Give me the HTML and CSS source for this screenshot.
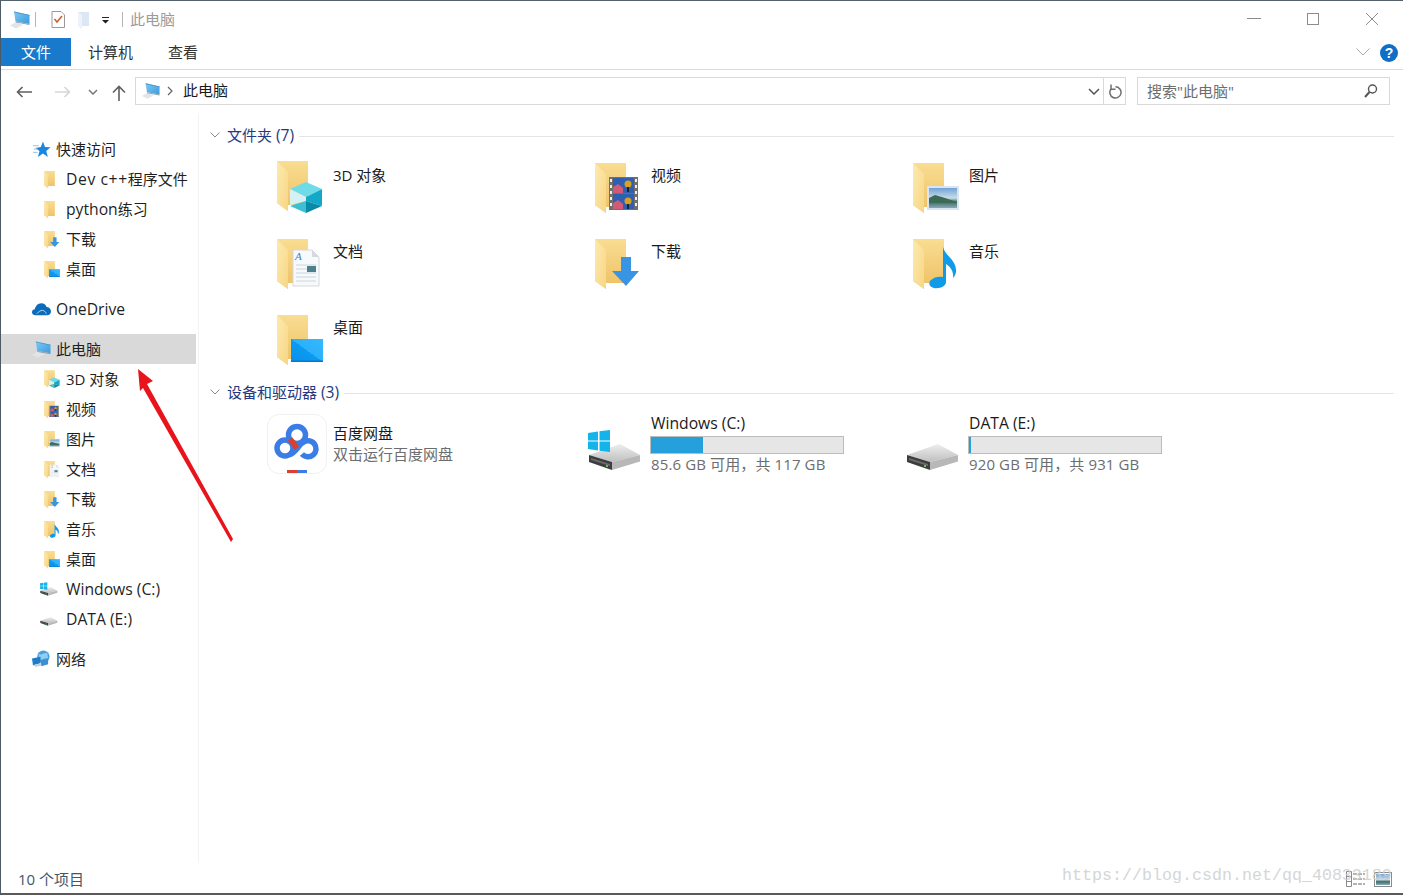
FILE: index.html
```html
<!DOCTYPE html>
<html lang="zh-CN">
<head>
<meta charset="utf-8">
<title>此电脑</title>
<link rel="stylesheet" href="styles.css">
</head>
<body>
<svg class="defs" width="0" height="0" aria-hidden="true">
  <defs>
    <linearGradient id="gBack" x1="0" y1="0" x2="0" y2="1"><stop offset="0" stop-color="#f9dd92"/><stop offset="1" stop-color="#eec063"/></linearGradient>
    <linearGradient id="gFront" x1="0" y1="0" x2="1" y2="1"><stop offset="0" stop-color="#fdeab0"/><stop offset="1" stop-color="#f7d684"/></linearGradient>
    <linearGradient id="gDesk" x1="0" y1="1" x2="1" y2="0"><stop offset="0" stop-color="#0a8fe8"/><stop offset=".5" stop-color="#0a9cf2"/><stop offset=".5" stop-color="#2bb0fb"/><stop offset="1" stop-color="#35b8ff"/></linearGradient>
    <linearGradient id="gSky" x1="0" y1="0" x2="0" y2="1"><stop offset="0" stop-color="#6fa3d8"/><stop offset=".5" stop-color="#c9dde8"/><stop offset=".7" stop-color="#3f6d62"/><stop offset="1" stop-color="#8aa9bd"/></linearGradient>
    <linearGradient id="gTop" x1="0" y1="0" x2="0" y2="1"><stop offset="0" stop-color="#eeeeee"/><stop offset="1" stop-color="#bfbfbf"/></linearGradient>
    <linearGradient id="gMon" x1="0" y1="0" x2="1" y2="1"><stop offset="0" stop-color="#7fcaf2"/><stop offset="1" stop-color="#3b9ae0"/></linearGradient>

    <symbol id="folder" viewBox="0 0 56 56">
      <path d="M1 3H32V47H12V53L1 45Z" fill="url(#gBack)"/>
      <path d="M1 3L12 14V53L1 45Z" fill="url(#gFront)"/>
    </symbol>

    <symbol id="f3d" viewBox="0 0 56 56">
      <use href="#folder" y="-2" width="56" height="56"/>
      <path d="M30 22L46 29L30 37L14 29Z" fill="#6ddbe8"/>
      <path d="M14 29L30 37V41L14 45Z" fill="#d6f1f3"/>
      <path d="M30 37L46 29V46L30 41Z" fill="#12a9c9"/>
      <path d="M14 46L30 41V53Z" fill="#3bbfd5"/>
      <path d="M46 46L30 41V53Z" fill="#0b8aa8"/>
    </symbol>
    <symbol id="fvideo" viewBox="0 0 56 56">
      <use href="#folder" width="56" height="56"/>
      <rect x="15" y="17" width="29" height="33" fill="#6f6f6f"/>
      <path d="M16 19h2v3h-2zM16 25h2v3h-2zM16 31h2v3h-2zM16 37h2v3h-2zM16 43h2v3h-2zM41 19h2v3h-2zM41 25h2v3h-2zM41 31h2v3h-2zM41 37h2v3h-2zM41 43h2v3h-2z" fill="#eee"/>
      <rect x="19" y="18" width="21" height="15" fill="#2f5fb0"/>
      <rect x="19" y="34" width="21" height="15" fill="#2f5fb0"/>
      <path d="M19 27l5-3 5 4v5H19zM19 43l5-3 5 4v5H19z" fill="#d05a78"/>
      <circle cx="34" cy="24" r="3.500" fill="#d8a020"/><circle cx="34" cy="41" r="3.500" fill="#d8a020"/>
      <path d="M33 27h2v5h-2zM33 44h2v5h-2z" fill="#222"/>
    </symbol>
    <symbol id="fpic" viewBox="0 0 56 56">
      <use href="#folder" width="56" height="56"/>
      <rect x="15" y="26" width="32" height="24" fill="#d9e6f2"/>
      <rect x="17" y="28" width="28" height="20" fill="url(#gSky)"/>
      <path d="M17 38l6-3 10 3 12 4v1H17z" fill="#3b6a55"/>
    </symbol>
    <symbol id="fdoc" viewBox="0 0 56 56">
      <use href="#folder" width="56" height="56"/>
      <path d="M17 14H36L43 21V50H17Z" fill="#f8f9fb" stroke="#d4d8dd"/>
      <path d="M36 14V21H43Z" fill="#d4dae0"/>
      <path d="M20 29H40M20 33H40M20 37H40M20 41H40M20 45H40" stroke="#c7d4e2"/>
      <text class="doc-a" x="19" y="24">A</text>
      <rect x="31" y="30" width="9" height="6" fill="#4d7f8c"/>
    </symbol>
    <symbol id="fdown" viewBox="0 0 56 56">
      <use href="#folder" width="56" height="56"/>
      <path d="M27 21H37V35H45L32 50L18 35H27Z" fill="#3a94e4"/>
    </symbol>
    <symbol id="fmusic" viewBox="0 0 56 56">
      <use href="#folder" width="56" height="56"/>
      <path d="M31 11C33 20 45 24 44 36C43.500 39 42 41 41 42C42 34 37 30 34 28V46C34 50 28 53 22 52C17 51 16 47 19 44C22 41 27 40 31 41Z" fill="#0f9be8"/>
    </symbol>
    <symbol id="fdesk" viewBox="0 0 56 56">
      <use href="#folder" width="56" height="56"/>
      <rect x="15" y="27" width="32" height="23" fill="url(#gDesk)"/>
      <rect x="15" y="48.500" width="32" height="1.500" fill="#0878c8"/>
    </symbol>
    <symbol id="fplain" viewBox="0 0 56 56">
      <use href="#folder" width="56" height="56"/>
    </symbol>

    <symbol id="pc" viewBox="0 0 20 20">
      <path d="M6 12L0 15.500L6 18.500L13 15Z" fill="#e2e5e8"/>
      <path d="M4 1.500L19.500 5V14L5.500 11.500Z" fill="url(#gMon)"/>
      <path d="M4 1.500L19.500 5V5.800L4.100 2.400Z" fill="#4a92cc"/>
      <path d="M5.500 11.500L19.500 14V15L6 12.500Z" fill="#8f9eaa"/>
    </symbol>
    <symbol id="star" viewBox="0 0 20 20">
      <path d="M11.500 1.500L13.700 7.300L19.500 7.700L15 11.500L16.700 17.800L11.500 14.300L6.200 17.800L7.900 11.500L3.500 8.300L9.300 7.300Z" fill="#1a87dc"/>
      <path d="M1 6H7M2 9.500H6M1 13H6" stroke="#8cc2ec"/>
    </symbol>
    <symbol id="cloud" viewBox="0 0 20 14">
      <path d="M4 13.500C1.500 13.500 0 12 0 10.300C0 8.500 1.300 7.300 3 7.200C3.600 4 6.200 1 9.800 1C12.600 1 14.600 2.700 15.400 5C17.800 5 20 7 20 9.600C20 12 18.200 13.500 16 13.500Z" fill="#0c6cbc"/>
      <path d="M5 12C7 9.800 9 8.300 11 8.500C13 8.700 14.300 10 15 12" fill="none" stroke="#cfe4f5" stroke-width=".9"/>
    </symbol>
    <symbol id="net" viewBox="0 0 20 20">
      <circle cx="12" cy="7" r="6.500" fill="#4b9fda"/>
      <path d="M7 4C10 6 13 3 16 3L17 9C14 8 11 10 8 11Z" fill="#8dd0f0"/>
      <path d="M0 9L9 7V14L1 16Z" fill="#1f7cc8"/>
      <path d="M1 16L9 14L11 16L4 18Z" fill="#c9d1d8"/>
      <path d="M9 11L17 9V15L10 17Z" fill="#3d8fd2"/>
    </symbol>

    <symbol id="drive" viewBox="0 0 60 60">
      <path d="M4 41L35 30L55 41L27 48Z" fill="url(#gTop)"/>
      <path d="M27 48L55 41V47.500L27 56Z" fill="#b8b8b8"/>
      <path d="M4 41L27 48V56L4 48Z" fill="#3d3d3d"/>
      <path d="M6 44L25 50V52L6 46Z" fill="#6b6b6b"/>
      <rect x="21" y="51" width="2" height="2" fill="#59c85a"/>
    </symbol>
    <symbol id="drivewin" viewBox="0 0 60 60">
      <use href="#drive" width="60" height="60"/>
      <path d="M3 19L13 17.500V26.500H3ZM14.500 17.300L25 16V26.500H14.500ZM3 27.500H13V36.500L3 35ZM14.500 27.500H25V38L14.500 36.700Z" fill="#12b4ea"/>
    </symbol>
  </defs>
</svg>

<div class="window">
  <header class="titlebar">
    <svg class="qa-pc"><use href="#pc"/></svg>
    <span class="qa-sep"></span>
    <svg class="qa-check" viewBox="0 0 14 17">
      <path d="M1 .500H10L13.500 4V16.500H1Z" fill="#fff" stroke="#9a9a9a"/>
      <path d="M3.500 8L6 11L11 5" fill="none" stroke="#d8572a" stroke-width="1.500"/>
    </svg>
    <svg class="qa-folder" viewBox="0 0 13 18">
      <path d="M1 1H12V15H5V18L1 15Z" fill="#dce6f4"/>
      <path d="M1 1L5 4V18L1 15Z" fill="#eef3fb"/>
    </svg>
    <svg class="qa-drop" viewBox="0 0 8 7">
      <path d="M0 0H7V1H0ZM0 3H7L3.500 6.500Z" fill="#222"/>
    </svg>
    <span class="qa-sep qa-sep2"></span>
    <span class="title-text">此电脑</span>
    <div class="win-controls">
      <svg class="wc" viewBox="0 0 14 12"><path d="M0 5.500H14" stroke="#8c8c8c"/></svg>
      <svg class="wc" viewBox="0 0 14 12"><rect x="1.500" y=".5" width="11" height="11" fill="none" stroke="#8c8c8c"/></svg>
      <svg class="wc" viewBox="0 0 14 12"><path d="M1 0L13 12M13 0L1 12" stroke="#8c8c8c"/></svg>
    </div>
  </header>

  <nav class="ribbon">
    <span class="tab tab-file">文件</span>
    <span class="tab tab-a">计算机</span>
    <span class="tab tab-b">查看</span>
    <svg class="rib-chev" viewBox="0 0 14 8"><path d="M.5 .5L7 7L13.500 .5" fill="none" stroke="#a9a9a9"/></svg>
    <span class="help">?</span>
  </nav>

  <div class="addrbar">
    <svg class="nav-btn back" viewBox="0 0 16 12"><path d="M16 6H1.500M6.500 1L1.500 6L6.500 11" fill="none" stroke="#5f5f5f" stroke-width="1.600"/></svg>
    <svg class="nav-btn fwd" viewBox="0 0 16 12"><path d="M0 6H14.500M9.500 1L14.500 6L9.500 11" fill="none" stroke="#d6d6d6" stroke-width="1.600"/></svg>
    <svg class="nav-btn recent" viewBox="0 0 10 6"><path d="M1 1L5 5L9 1" fill="none" stroke="#777" stroke-width="1.500"/></svg>
    <svg class="nav-btn up" viewBox="0 0 14 16"><path d="M7 16V1.500M1 7.500L7 1.500L13 7.500" fill="none" stroke="#5f5f5f" stroke-width="1.600"/></svg>
    <div class="addr-box">
      <svg class="addr-pc"><use href="#pc"/></svg>
      <svg class="addr-crumb" viewBox="0 0 6 10"><path d="M1 1L5 5L1 9" fill="none" stroke="#666" stroke-width="1.200"/></svg>
      <span class="addr-text">此电脑</span>
      <svg class="addr-drop" viewBox="0 0 12 7"><path d="M1 1L6 6L11 1" fill="none" stroke="#555" stroke-width="1.500"/></svg>
    </div>
    <div class="refresh">
      <svg viewBox="0 0 14 15"><path d="M7.500 2.800A5.600 5.600 0 1 1 3 5" fill="none" stroke="#6f6f6f" stroke-width="1.500"/><path d="M3 .5V5.300H7.500" fill="none" stroke="#6f6f6f" stroke-width="1.500"/></svg>
    </div>
    <div class="search">
      <span class="search-text">搜索"此电脑"</span>
      <svg class="search-ico" viewBox="0 0 14 14"><circle cx="8.500" cy="5" r="4" fill="none" stroke="#555" stroke-width="1.400"/><path d="M5.500 8L1 13" stroke="#555" stroke-width="2"/></svg>
    </div>
  </div>

  <main class="main">
    <aside class="sidebar">
      <div class="nav-row top"><svg class="nav-ico"><use href="#star"/></svg>快速访问</div>
      <div class="nav-row indent"><svg class="nav-ico"><use href="#fplain"/></svg><span class="lat plus">Dev c++</span>程序文件</div>
      <div class="nav-row indent"><svg class="nav-ico"><use href="#fplain"/></svg><span class="lat">python</span>练习</div>
      <div class="nav-row indent"><svg class="nav-ico"><use href="#fdown"/></svg>下载</div>
      <div class="nav-row indent"><svg class="nav-ico"><use href="#fdesk"/></svg>桌面</div>
      <div class="nav-row top spaced"><svg class="nav-ico cloud"><use href="#cloud"/></svg><span class="lat">OneDrive</span></div>
      <div class="nav-row top spaced selected"><svg class="nav-ico"><use href="#pc"/></svg>此电脑</div>
      <div class="nav-row indent"><svg class="nav-ico"><use href="#f3d"/></svg>3D 对象</div>
      <div class="nav-row indent"><svg class="nav-ico"><use href="#fvideo"/></svg>视频</div>
      <div class="nav-row indent"><svg class="nav-ico"><use href="#fpic"/></svg>图片</div>
      <div class="nav-row indent"><svg class="nav-ico"><use href="#fdoc"/></svg>文档</div>
      <div class="nav-row indent"><svg class="nav-ico"><use href="#fdown"/></svg>下载</div>
      <div class="nav-row indent"><svg class="nav-ico"><use href="#fmusic"/></svg>音乐</div>
      <div class="nav-row indent"><svg class="nav-ico"><use href="#fdesk"/></svg>桌面</div>
      <div class="nav-row indent"><svg class="nav-ico drv" viewBox="0 12 60 48"><use href="#drivewin" width="60" height="60"/></svg><span class="lat">Windows (C:)</span></div>
      <div class="nav-row indent"><svg class="nav-ico drv" viewBox="0 12 60 48"><use href="#drive" width="60" height="60"/></svg><span class="lat">DATA (E:)</span></div>
      <div class="nav-row top spaced"><svg class="nav-ico"><use href="#net"/></svg>网络</div>
    </aside>

    <section class="content">
      <div class="group-head">
        <svg class="group-chev" viewBox="0 0 10 6"><path d="M.5 .5L5 5L9.500 .5" fill="none" stroke="#8a8a8a"/></svg>
        <span class="group-title">文件夹 <span class="lat">(7)</span></span>
        <span class="group-line"></span>
      </div>
      <div class="folders">
        <div class="folder"><svg class="big"><use href="#f3d"/></svg><span class="name">3D 对象</span></div>
        <div class="folder"><svg class="big"><use href="#fvideo"/></svg><span class="name">视频</span></div>
        <div class="folder"><svg class="big"><use href="#fpic"/></svg><span class="name">图片</span></div>
        <div class="folder"><svg class="big"><use href="#fdoc"/></svg><span class="name">文档</span></div>
        <div class="folder"><svg class="big"><use href="#fdown"/></svg><span class="name">下载</span></div>
        <div class="folder"><svg class="big"><use href="#fmusic"/></svg><span class="name">音乐</span></div>
        <div class="folder"><svg class="big"><use href="#fdesk"/></svg><span class="name">桌面</span></div>
      </div>
      <div class="group-head">
        <svg class="group-chev" viewBox="0 0 10 6"><path d="M.5 .5L5 5L9.500 .5" fill="none" stroke="#8a8a8a"/></svg>
        <span class="group-title">设备和驱动器 <span class="lat">(3)</span></span>
        <span class="group-line"></span>
      </div>
      <div class="devices">
        <div class="device">
          <div class="baidu">
            <svg viewBox="0 0 58 58">
              <g fill="none" stroke="#3b7de6" stroke-width="5.500">
                <circle cx="29" cy="20" r="8.500"/>
                <circle cx="17" cy="33" r="8"/>
                <path d="M22 39.500C27 38 31 30 35 27.500A8 8 0 1 1 34 39"/>
              </g>
              <path d="M22 24L29 33" fill="none" stroke="#d8402f" stroke-width="5.500"/>
              <rect x="19" y="55" width="10" height="3" fill="#d8402f"/>
              <rect x="29" y="55" width="10" height="3" fill="#3b7de6"/>
            </svg>
          </div>
          <div class="dev-text app"><span class="name">百度网盘</span><span class="note">双击运行百度网盘</span></div>
        </div>
        <div class="device">
          <svg class="drive-big"><use href="#drivewin"/></svg>
          <div class="dev-text">
            <span class="name lat">Windows (C:)</span>
            <div class="bar"><div class="fill" style="width:27%"></div></div>
            <span class="note drive-note">85.6 GB 可用，共 117 GB</span>
          </div>
        </div>
        <div class="device">
          <svg class="drive-big"><use href="#drive"/></svg>
          <div class="dev-text">
            <span class="name lat">DATA (E:)</span>
            <div class="bar"><div class="fill" style="width:1%"></div></div>
            <span class="note drive-note">920 GB 可用，共 931 GB</span>
          </div>
        </div>
      </div>
    </section>
  </main>

  <footer class="status">
    <span class="count">10 个项目</span>
    <svg class="view-list" viewBox="0 0 19 16">
      <path d="M.5 .5H5.500V15.500H.5ZM.5 5.500H5.500M.5 10.500H5.500" fill="#fff" stroke="#8a8a8a"/>
      <path d="M7 3H19M7 8H19M7 13H19" stroke="#666" stroke-dasharray="4 1"/>
    </svg>
    <svg class="view-pic" viewBox="0 0 18 15">
      <rect x=".5" y=".5" width="17" height="14" fill="#fff" stroke="#8a8a8a"/>
      <rect x="2" y="2" width="14" height="11" fill="url(#gSky)"/>
    </svg>
  </footer>

  <svg class="red-arrow" viewBox="0 0 1403 895">
    <path d="M138 369L153 381L147 384L233 539L231 542L143 388L140 391Z" fill="#e8141c"/>
  </svg>
  <span class="watermark">https://blog.csdn.net/qq_40833189</span>
</div>
</body>
</html>
```

FILE: styles.css
```css
* { box-sizing: border-box; }
html, body { margin: 0; padding: 0; background: #fff; }
body {
  font-family: "Open Sans", "Noto Sans CJK SC", sans-serif;
  font-size: 15px;
  line-height: 20px;
  color: #1a1a1a;
  overflow: hidden;
}
.defs { position: absolute; }
.doc-a { font-family: "Liberation Serif", serif; font-style: italic; font-size: 11px; fill: #3f7fc4; }
.lat { font-size: 15.7px; }
.plus { letter-spacing: .6px; }

.window {
  position: relative;
  width: 1403px;
  height: 895px;
  display: flex;
  flex-direction: column;
  border-top: 1px solid #53626e;
  border-left: 1px solid #4c5a66;
  border-bottom: 2px solid #5a5a5a;
  overflow: hidden;
}

/* title bar */
.titlebar { height: 37px; flex: none; display: flex; align-items: center; padding-left: 9px; }
.qa-pc { width: 20px; height: 20px; }
.qa-sep { width: 1px; height: 15px; background: #b5b5b5; margin-left: 5px; }
.qa-check { width: 14px; height: 17px; margin-left: 15px; }
.qa-folder { width: 13px; height: 18px; margin-left: 12px; }
.qa-drop { width: 8px; height: 7px; margin-left: 12px; margin-top: 2px; }
.qa-sep2 { margin-left: 12px; }
.title-text { margin-left: 7px; margin-top: -2px; color: #9b9b9b; }
.win-controls { margin-left: auto; display: flex; gap: 45px; padding-right: 24px; margin-top: -1px; }
.wc { width: 14px; height: 12px; }

/* ribbon */
.ribbon { height: 32px; flex: none; display: flex; padding-bottom: 3px; border-bottom: 1px solid #dadada; position: relative; }
.tab { height: 28px; display: flex; align-items: center; color: #333; }
.tab-file { width: 70px; justify-content: center; background: #1979ca; color: #fff; }
.tab-a { margin-left: 17px; }
.tab-b { margin-left: 35px; }
.rib-chev { width: 14px; height: 8px; margin-left: auto; margin-top: 10px; }
.help {
  width: 18px; height: 18px; margin: 6px 5px 0 10px;
  border-radius: 50%;
  background: #0f6fc6; color: #fff;
  font-family: "Liberation Sans", sans-serif; font-weight: 700; font-size: 14px; line-height: 18px; text-align: center;
}

/* address bar */
.addrbar { height: 43px; flex: none; display: flex; align-items: flex-start; padding-top: 7px; position: relative; }
.nav-btn { flex: none; margin-top: 9px; }
.back { width: 16px; height: 12px; margin-left: 15px; }
.fwd { width: 16px; height: 12px; margin-left: 23px; }
.recent { width: 10px; height: 6px; margin-left: 17px; margin-top: 12px; }
.up { width: 14px; height: 16px; margin-left: 14px; margin-top: 8px; }
.addr-box {
  width: 969px; height: 28px; margin-left: 9px;
  border: 1px solid #d9d9d9;
  display: flex; align-items: center; padding-left: 6px;
}
.addr-pc { width: 18px; height: 18px; flex: none; }
.addr-crumb { width: 6px; height: 10px; margin-left: 7px; }
.addr-text { margin-left: 10px; margin-top: -2px; color: #1a1a1a; }
.addr-drop { width: 12px; height: 7px; margin-left: auto; margin-right: 3px; }
.refresh {
  width: 22px; height: 28px;
  border: 1px solid #d9d9d9; border-left: 0;
  display: flex; align-items: center; justify-content: center;
}
.refresh svg { width: 14px; height: 15px; }
.search {
  width: 253px; height: 28px; margin-left: 11px;
  border: 1px solid #d9d9d9;
  display: flex; align-items: center; padding: 0 11px 0 9px;
  color: #6d6d6d; font-size: 15px;
}
.search-ico { width: 14px; height: 14px; margin-left: auto; }

/* main */
.main { flex: 1; display: flex; min-height: 0; }
.sidebar { width: 198px; flex: none; padding: 21px 2px 0 0; border-right: 1px solid #f3f3f3; }
.nav-row { height: 30px; display: flex; align-items: center; white-space: nowrap; color: #1f1f1f; }
.nav-row.top { padding-left: 31px; }
.nav-row.indent { padding-left: 43px; }
.nav-row.spaced { margin-top: 10px; }
.nav-row.selected { background: #d9d9d9; }
.nav-ico { width: 19px; height: 19px; flex: none; margin-right: 5px; }
.nav-row.indent .nav-ico { margin-right: 3px; }
.nav-ico.cloud { height: 14px; }
.nav-row.indent .nav-ico.drv { width: 20px; height: 16px; margin-left: -5px; margin-right: 7px; }

/* content */
.content { flex: 1; padding-top: 12px; min-width: 0; }
.group-head { height: 20px; display: flex; align-items: center; padding-left: 11px; padding-right: 9px; }
.group-chev { width: 10px; height: 6px; flex: none; }
.group-title { margin-left: 7px; color: #26387f; white-space: nowrap; }
.group-line { flex: 1; height: 1px; background: #e5e5e5; margin: 2px 0 0 5px; }
.folders {
  display: grid;
  grid-template-columns: repeat(3, 318px);
  grid-auto-rows: 56px;
  row-gap: 20px;
  padding-left: 77px;
  margin: 15px 0 14px;
}
.folder { display: flex; align-items: flex-start; }
.big { width: 56px; height: 56px; flex: none; }
.name { color: #1a1a1a; white-space: nowrap; }
.folder .name { margin: 5px 0 0 1px; }

.devices {
  display: grid;
  grid-template-columns: repeat(3, 318px);
  padding-left: 68px;
  margin-top: 12px;
}
.device { display: flex; height: 60px; gap: 5px; }
.baidu {
  width: 60px; height: 60px; flex: none;
  border: 1px solid #f0f0f0; border-radius: 12px;
  overflow: hidden;
}
.baidu svg { display: block; width: 58px; height: 58px; }
.drive-big { width: 60px; height: 60px; flex: none; }
.dev-text { display: flex; flex-direction: column; width: 194px; margin-top: -1px; }
.dev-text .name, .note { margin-left: 1px; }
.dev-text.app { margin-top: 9px; }
.dev-text.app .note { margin-top: 1px; }
.note { color: #6d6d6d; white-space: nowrap; }
.drive-note { letter-spacing: .12px; }
.bar { height: 18px; margin-top: 3px; border: 1px solid #bcbcbc; background: #e6e6e6; flex: none; }
.fill { height: 100%; background: #26a0da; }

/* status */
.status { height: 30px; flex: none; display: flex; align-items: center; padding-left: 17px; }
.count { color: #44566c; margin-top: 2px; }
.view-list { width: 19px; height: 16px; margin-left: auto; margin-top: 2px; }
.view-pic { width: 18px; height: 15px; margin-left: 9px; margin-right: 11px; margin-top: 2px; }

/* overlays */
.red-arrow { position: absolute; left: -1px; top: -1px; width: 1403px; height: 895px; pointer-events: none; }
.watermark {
  position: absolute; left: 1061px; top: 865px;
  font-family: "Liberation Mono", monospace; font-size: 16.67px; line-height: 20px;
  color: #cfcfcf; opacity: .85; white-space: nowrap;
}
```
